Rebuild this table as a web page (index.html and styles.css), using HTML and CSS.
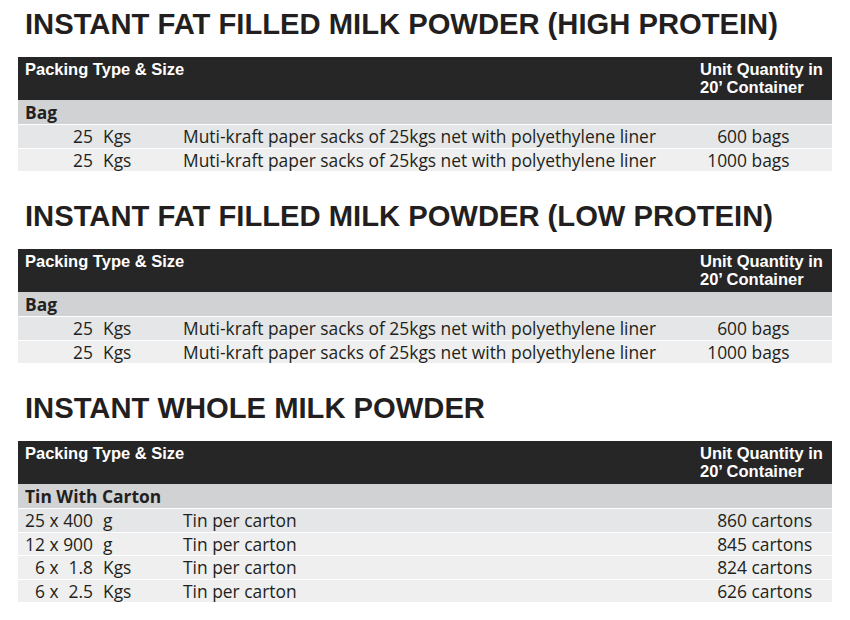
FILE: index.html
```html
<!DOCTYPE html>
<html lang="en">
<head>
<meta charset="utf-8">
<title>Milk Powder Packing</title>
<link rel="stylesheet" href="styles.css">
</head>
<body>
<section class="product">
  <h2 class="title">INSTANT FAT FILLED MILK POWDER (HIGH PROTEIN)</h2>
  <div class="table">
    <div class="thead">
      <div class="th th-main">Packing Type &amp; Size</div>
      <div class="th th-qty">Unit Quantity in<br>20’ Container</div>
    </div>
    <div class="group">Bag</div>
    <div class="row row-first">
      <div class="cell size"><span class="cnt"></span><span class="x"></span><span class="wt">25</span><span class="unit">Kgs</span></div>
      <div class="cell desc">Muti-kraft paper sacks of 25kgs net with polyethylene liner</div>
      <div class="cell qty"><span class="num">600</span> bags</div>
    </div>
    <div class="row">
      <div class="cell size"><span class="cnt"></span><span class="x"></span><span class="wt">25</span><span class="unit">Kgs</span></div>
      <div class="cell desc">Muti-kraft paper sacks of 25kgs net with polyethylene liner</div>
      <div class="cell qty"><span class="num">1000</span> bags</div>
    </div>
  </div>
</section>

<section class="product">
  <h2 class="title">INSTANT FAT FILLED MILK POWDER (LOW PROTEIN)</h2>
  <div class="table">
    <div class="thead">
      <div class="th th-main">Packing Type &amp; Size</div>
      <div class="th th-qty">Unit Quantity in<br>20’ Container</div>
    </div>
    <div class="group">Bag</div>
    <div class="row row-first">
      <div class="cell size"><span class="cnt"></span><span class="x"></span><span class="wt">25</span><span class="unit">Kgs</span></div>
      <div class="cell desc">Muti-kraft paper sacks of 25kgs net with polyethylene liner</div>
      <div class="cell qty"><span class="num">600</span> bags</div>
    </div>
    <div class="row">
      <div class="cell size"><span class="cnt"></span><span class="x"></span><span class="wt">25</span><span class="unit">Kgs</span></div>
      <div class="cell desc">Muti-kraft paper sacks of 25kgs net with polyethylene liner</div>
      <div class="cell qty"><span class="num">1000</span> bags</div>
    </div>
  </div>
</section>

<section class="product">
  <h2 class="title">INSTANT WHOLE MILK POWDER</h2>
  <div class="table">
    <div class="thead">
      <div class="th th-main">Packing Type &amp; Size</div>
      <div class="th th-qty">Unit Quantity in<br>20’ Container</div>
    </div>
    <div class="group">Tin With Carton</div>
    <div class="row row-first">
      <div class="cell size"><span class="cnt">25</span><span class="x">x</span><span class="wt">400</span><span class="unit">g</span></div>
      <div class="cell desc">Tin per carton</div>
      <div class="cell qty"><span class="num">860</span> cartons</div>
    </div>
    <div class="row">
      <div class="cell size"><span class="cnt">12</span><span class="x">x</span><span class="wt">900</span><span class="unit">g</span></div>
      <div class="cell desc">Tin per carton</div>
      <div class="cell qty"><span class="num">845</span> cartons</div>
    </div>
    <div class="row">
      <div class="cell size"><span class="cnt">6</span><span class="x">x</span><span class="wt">1.8</span><span class="unit">Kgs</span></div>
      <div class="cell desc">Tin per carton</div>
      <div class="cell qty"><span class="num">824</span> cartons</div>
    </div>
    <div class="row">
      <div class="cell size"><span class="cnt">6</span><span class="x">x</span><span class="wt">2.5</span><span class="unit">Kgs</span></div>
      <div class="cell desc">Tin per carton</div>
      <div class="cell qty"><span class="num">626</span> cartons</div>
    </div>
  </div>
</section>
</body>
</html>
```
FILE: styles.css
```css
html, body {
  margin: 0;
  padding: 0;
  background: #ffffff;
}

body {
  font-family: "Open Sans", "Noto Sans", sans-serif;
  color: #231f20;
  padding: 0 18px;
}

.product + .product {
  margin-top: 21px;
}

.title {
  margin: 0 0 16px 0;
  padding: 7px 0 0 7px;
  font-family: "Liberation Sans", Arial, sans-serif;
  font-weight: 700;
  font-size: 29.2px;
  line-height: 34px;
  color: #231f20;
  white-space: nowrap;
}

.table {
  width: 814px;
}

.thead,
.row {
  display: grid;
  grid-template-columns: 157px 524px 1fr;
}

.thead {
  height: 43px;
  background: #262626;
  color: #ffffff;
  font-family: "Liberation Sans", Arial, sans-serif;
  font-weight: 700;
  font-size: 16.5px;
  line-height: 18px;
  box-sizing: border-box;
  padding-top: 3px;
}

.th-main {
  grid-column: 1 / 3;
  padding-left: 7px;
}

.th-qty {
  padding-left: 1px;
  white-space: nowrap;
}

.group {
  height: 24px;
  box-sizing: border-box;
  padding: 1px 0 0 7px;
  background: #d1d2d4;
  font-weight: 700;
  font-size: 17.4px;
  line-height: 23px;
}

.row {
  margin-top: 1px;
  height: 22.5px;
  background: #efefef;
  font-size: 17.4px;
  line-height: 23px;
}

.row-first {
  background: #e5e6e7;
}

.cell {
  padding-left: 8px;
  white-space: nowrap;
}

.size {
  display: grid;
  grid-template-columns: 20px 18px 30px 1fr;
  padding-left: 7px;
}

.cnt,
.wt {
  text-align: right;
}

.x {
  text-align: center;
}

.unit {
  padding-left: 10px;
}

.num {
  display: inline-block;
  min-width: 40px;
  text-align: right;
}
```
